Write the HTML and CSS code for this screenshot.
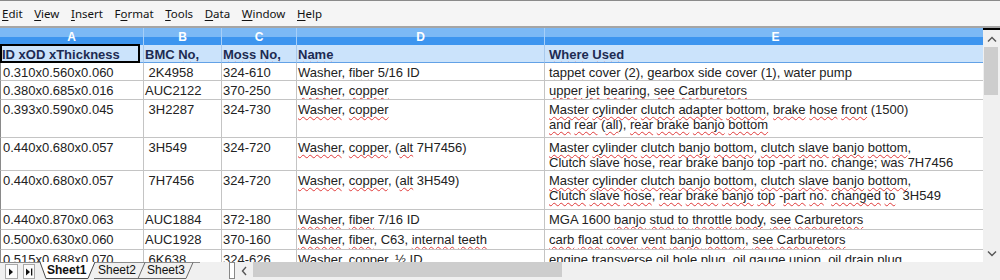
FILE: index.html
```html
<!DOCTYPE html>
<html>
<head>
<meta charset="utf-8">
<link rel="stylesheet" href="styles.css">
</head>
<body>
<div class="app">
  <div class="menubar">
    <span class="mi"><u>E</u>dit</span>
    <span class="mi"><u>V</u>iew</span>
    <span class="mi"><u>I</u>nsert</span>
    <span class="mi">F<u>o</u>rmat</span>
    <span class="mi"><u>T</u>ools</span>
    <span class="mi"><u>D</u>ata</span>
    <span class="mi"><u>W</u>indow</span>
    <span class="mi"><u>H</u>elp</span>
  </div>
  <div class="main">
    <div class="sheet">
      <div class="grid">
        <div class="ch">A</div><div class="ch">B</div><div class="ch">C</div><div class="ch">D</div><div class="ch">E</div>

        <div class="lab a sel">ID xOD xThickness</div>
        <div class="lab b">BMC <span class="w">No,</span></div>
        <div class="lab c"><span class="w">Moss</span> <span class="w">No,</span></div>
        <div class="lab d"><span class="w">Name</span></div>
        <div class="lab e"><span class="w">Where</span> <span class="w">Used</span></div>

        <div class="cell a">0.310x0.560x0.060</div>
        <div class="cell b"> 2K4958</div>
        <div class="cell c">324-610</div>
        <div class="cell d"><span class="w">Washer</span>, <span class="w">fiber</span> 5/16 ID</div>
        <div class="cell e"><span class="w">tappet</span> <span class="w">cover</span> (2), <span class="w">gearbox</span> <span class="w">side</span> <span class="w">cover</span> (1), <span class="w">water</span> <span class="w">pump</span></div>

        <div class="cell a">0.380x0.685x0.016</div>
        <div class="cell b">AUC2122</div>
        <div class="cell c">370-250</div>
        <div class="cell d"><span class="w">Washer</span>, <span class="w">copper</span></div>
        <div class="cell e"><span class="w">upper</span> <span class="w">jet</span> <span class="w">bearing</span>, <span class="w">see</span> <span class="w">Carburetors</span></div>

        <div class="cell a">0.393x0.590x0.045</div>
        <div class="cell b"> 3H2287</div>
        <div class="cell c">324-730</div>
        <div class="cell d"><span class="w">Washer</span>, <span class="w">copper</span></div>
        <div class="cell e"><span class="w">Master</span> <span class="w">cylinder</span> <span class="w">clutch</span> <span class="w">adapter</span> <span class="w">bottom</span>, <span class="w">brake</span> <span class="w">hose</span> <span class="w">front</span> (1500)
<span class="w">and</span> <span class="w">rear</span> (<span class="w">all</span>), <span class="w">rear</span> <span class="w">brake</span> <span class="w">banjo</span> <span class="w">bottom</span></div>

        <div class="cell a">0.440x0.680x0.057</div>
        <div class="cell b"> 3H549</div>
        <div class="cell c">324-720</div>
        <div class="cell d"><span class="w">Washer</span>, <span class="w">copper</span>, (<span class="w">alt</span> 7H7456)</div>
        <div class="cell e"><span class="w">Master</span> <span class="w">cylinder</span> <span class="w">clutch</span> <span class="w">banjo</span> <span class="w">bottom</span>, <span class="w">clutch</span> <span class="w">slave</span> <span class="w">banjo</span> <span class="w">bottom</span>,
<span class="w">Clutch</span> <span class="w">slave</span> <span class="w">hose</span>, <span class="w">rear</span> <span class="w">brake</span> <span class="w">banjo</span> <span class="w">top</span> -<span class="w">part</span> <span class="w">no</span>. <span class="w">change</span>; <span class="w">was</span> 7H7456</div>

        <div class="cell a">0.440x0.680x0.057</div>
        <div class="cell b"> 7H7456</div>
        <div class="cell c">324-720</div>
        <div class="cell d"><span class="w">Washer</span>, <span class="w">copper</span>, (<span class="w">alt</span> 3H549)</div>
        <div class="cell e"><span class="w">Master</span> <span class="w">cylinder</span> <span class="w">clutch</span> <span class="w">banjo</span> <span class="w">bottom</span>, <span class="w">clutch</span> <span class="w">slave</span> <span class="w">banjo</span> <span class="w">bottom</span>,
<span class="w">Clutch</span> <span class="w">slave</span> <span class="w">hose</span>, <span class="w">rear</span> <span class="w">brake</span> <span class="w">banjo</span> <span class="w">top</span> -<span class="w">part</span> <span class="w">no</span>. <span class="w">changed</span> <span class="w">to</span>  3H549</div>

        <div class="cell a">0.440x0.870x0.063</div>
        <div class="cell b">AUC1884</div>
        <div class="cell c">372-180</div>
        <div class="cell d"><span class="w">Washer</span>, <span class="w">fiber</span> 7/16 ID</div>
        <div class="cell e">MGA 1600 <span class="w">banjo</span> <span class="w">stud</span> <span class="w">to</span> <span class="w">throttle</span> <span class="w">body</span>, <span class="w">see</span> <span class="w">Carburetors</span></div>

        <div class="cell a">0.500x0.630x0.060</div>
        <div class="cell b">AUC1928</div>
        <div class="cell c">370-160</div>
        <div class="cell d"><span class="w">Washer</span>, <span class="w">fiber</span>, C63, <span class="w">internal</span> <span class="w">teeth</span></div>
        <div class="cell e"><span class="w">carb</span> <span class="w">float</span> <span class="w">cover</span> <span class="w">vent</span> <span class="w">banjo</span> <span class="w">bottom</span>, <span class="w">see</span> <span class="w">Carburetors</span></div>

        <div class="cell a">0.515x0.688x0.070</div>
        <div class="cell b"> 6K638</div>
        <div class="cell c">324-626</div>
        <div class="cell d"><span class="w">Washer</span>, <span class="w">copper</span>, ½ ID</div>
        <div class="cell e"><span class="w">engine</span> <span class="w">transverse</span> <span class="w">oil</span> <span class="w">hole</span> <span class="w">plug</span>, <span class="w">oil</span> <span class="w">gauge</span> <span class="w">union</span>, <span class="w">oil</span> <span class="w">drain</span> <span class="w">plug</span></div>
      </div>
    </div>
    <div class="vscroll">
      <div class="arrow">
        <svg width="10" height="6" viewBox="0 0 10 6"><path d="M1 5.5 L5 1.5 L9 5.5" fill="none" stroke="#555" stroke-width="1.4"/></svg>
      </div>
      <div class="vthumb"></div>
      <div class="spacer"></div>
      <div class="arrow">
        <svg width="10" height="6" viewBox="0 0 10 6"><path d="M1 0.5 L5 4.5 L9 0.5" fill="none" stroke="#555" stroke-width="1.4"/></svg>
      </div>
    </div>
  </div>
  <div class="bottombar">
    <div class="navs">
      <div class="navbtn">
        <svg width="6" height="8" viewBox="0 0 6 8"><path d="M1 0.5 L5 4 L1 7.5 Z" fill="#111"/></svg>
      </div>
      <div class="navbtn">
        <svg width="8" height="8" viewBox="0 0 8 8"><path d="M1 0.5 L5 4 L1 7.5 Z" fill="#111"/><rect x="6" y="0.5" width="1.3" height="7" fill="#111"/></svg>
      </div>
    </div>
    <div class="tabs">
      <svg class="tabshape" width="160" height="18" viewBox="0 0 160 18">
        <path d="M0 0.5 L160 0.5" stroke="#8c8c8c" stroke-width="1"/>
        <path d="M54 16.5 L146 16.5 M98 16.5 L105 0.5 M146 16.5 L153 0.5" fill="none" stroke="#6a6a6a" stroke-width="1"/>
        <path d="M0 0 L6 16.5 L48 16.5 L55 0 Z" fill="#ffffff"/>
        <path d="M0 0 L6 16.5 L48 16.5 L55 0" fill="none" stroke="#4a4a4a" stroke-width="1"/>
      </svg>
      <span class="tab active">Sheet1</span>
      <span class="tab">Sheet2</span>
      <span class="tab">Sheet3</span>
    </div>
    <div class="splitter"></div>
    <div class="harrow">
      <svg width="6" height="10" viewBox="0 0 6 10"><path d="M5 1 L1.5 5 L5 9" fill="none" stroke="#555" stroke-width="1.4"/></svg>
    </div>
    <div class="hthumb"></div>
  </div>
</div>
</body>
</html>
```

FILE: styles.css
```css
* { box-sizing: border-box; }
html, body { margin: 0; padding: 0; }
body {
  width: 1000px;
  height: 280px;
  overflow: hidden;
  background: #f0f0f0;
  font-family: "Liberation Sans", Arial, sans-serif;
}
.app { width: 1000px; height: 280px; display: flex; flex-direction: column; }

.menubar {
  height: 28px;
  flex: 0 0 28px;
  background: #f5f5f5;
  border-top: 1px solid #8a8a8a;
  border-bottom: 2px solid #a5a5a5;
  display: flex;
  align-items: center;
  padding: 0 0 1px 2px;
  font-family: "Noto Sans", "DejaVu Sans", sans-serif;
  font-size: 11.5px;
  color: #111;
  gap: 11.6px;
}
.mi u { text-decoration-thickness: 1px; text-underline-offset: 2px; }

.main { display: flex; height: 234px; flex: 0 0 234px; }
.sheet { width: 983px; height: 234px; overflow: hidden; background: #fff; }
.grid {
  display: grid;
  width: 1007px;
  grid-template-columns: 144px 78px 75px 248px 462px;
  grid-template-rows: 17px 18px 18px 19px 38px 33px 39px 20px 20px 20px;
}
.ch {
  background: linear-gradient(#7cb9f5 0, #7cb9f5 9px, #3d95ef 9px, #3d95ef 100%);
  color: #fff;
  font-weight: bold;
  font-size: 12px;
  line-height: 18px;
  text-align: center;
  border-right: 1px solid #a6cff8;
}
.lab {
  background: #cbe3fb;
  border-right: 1px solid #a8c9ec;
  border-bottom: 1px solid #62a1e6;
  font-weight: bold;
  font-size: 13px;
  line-height: 16px;
  padding: 2px 0 0 1px;
  color: #1d2b52;
  white-space: pre;
  overflow: hidden;
}
.cell {
  border-right: 1px solid #c4c4c4;
  border-bottom: 1px solid #c4c4c4;
  font-size: 13px;
  line-height: 15px;
  padding: 2px 0 0 1px;
  color: #222;
  white-space: pre;
  overflow: hidden;
}
.a { padding-left: 2px; }
.cell.a { border-left: 1px solid #8a8a8a; }
.e { padding-left: 4px; }
.sel { position: relative; overflow: visible; }
.sel::after {
  content: "";
  position: absolute;
  top: -1px;
  left: 0;
  right: 3px;
  bottom: -1px;
  border: 2px solid #000;
}
.w {
  text-decoration: underline wavy #e03a3a;
  text-decoration-thickness: 1px;
  text-underline-offset: 2px;
  text-decoration-skip-ink: none;
}

.vscroll {
  width: 17px;
  height: 234px;
  background: #f0f0f0;
  border-top: 2px solid #000;
  display: flex;
  flex-direction: column;
}
.arrow {
  height: 17px;
  flex: 0 0 17px;
  display: flex;
  align-items: center;
  justify-content: center;
}
.vthumb {
  height: 48px;
  flex: 0 0 48px;
  margin: 0 2px 0 1px;
  background: #cdcdcd;
}
.spacer { flex: 1; }

.bottombar {
  height: 18px;
  flex: 0 0 18px;
  display: flex;
  background: #f0f0f0;
}
.navs {
  display: flex;
  gap: 5px;
  padding: 1px 5px 0 5px;
  width: 40px;
  border-top: 1px solid #8c8c8c;
}
.navbtn {
  width: 13px;
  height: 15px;
  border: 1px solid #a9a9a9;
  background: #fbfbfb;
  display: flex;
  align-items: center;
  justify-content: center;
}
.tabs {
  position: relative;
  width: 189px;
  display: flex;
  padding-left: 7px;
  font-size: 12px;
  line-height: 17px;
  color: #111;
}
.tabshape { position: absolute; left: 0; top: 0; }
.tab { position: relative; width: 51px; }
.tab + .tab { width: 49px; }
.tab.active { font-weight: bold; }
.splitter {
  width: 6px;
  height: 17px;
  border: 1px solid #888;
  background: #fff;
}
.harrow {
  width: 18px;
  display: flex;
  align-items: center;
  justify-content: center;
}
.hthumb {
  width: 309px;
  height: 15px;
  background: #cdcdcd;
}
```
